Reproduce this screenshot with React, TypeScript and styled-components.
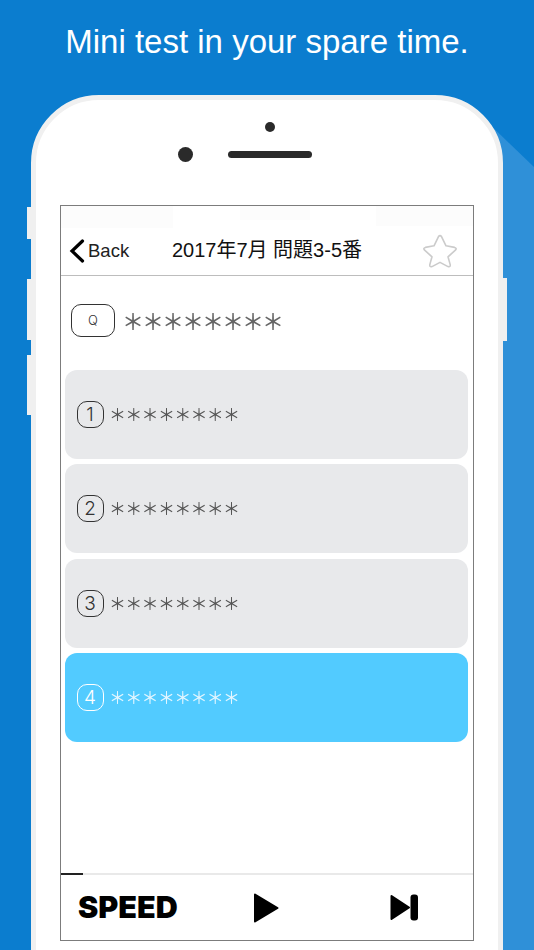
import React from "react";
import styled, { createGlobalStyle } from "styled-components";

const Global = createGlobalStyle`
  html, body { margin: 0; padding: 0; background: #0b7dcf; }
  body { width: 534px; height: 950px; overflow: hidden; font-family: "Liberation Sans", "Noto Sans CJK JP", sans-serif; }
`;

const Page = styled.div`
  position: relative;
  width: 534px;
  height: 950px;
  overflow: hidden;
  background: #0b7dcf;
`;

const Shadow = styled.div`
  position: absolute;
  inset: 0;
  background: #2f90d8;
  clip-path: polygon(480px 115px, 534px 167px, 534px 950px, 480px 950px);
`;

const Headline = styled.h1`
  position: relative;
  margin: 0;
  height: 95px;
  box-sizing: border-box;
  padding-top: 22px;
  text-align: center;
  font-size: 33px;
  line-height: 40px;
  font-weight: 400;
  color: #fff;
`;

const PhoneWrap = styled.div`
  position: relative;
  margin-left: 31px;
  width: 472px;
`;

const SideButton = styled.div<{ $side: "left" | "right"; $top: number; $height: number }>`
  position: absolute;
  ${(p) => p.$side}: -4px;
  top: ${(p) => p.$top}px;
  width: 4px;
  height: ${(p) => p.$height}px;
  background: #f0f0f0;
`;

const Phone = styled.div`
  box-sizing: border-box;
  width: 472px;
  height: 960px;
  background: #fff;
  border: 5px solid #f0f0f0;
  border-radius: 68px 68px 0 0;
  padding: 0 24px;
`;

const SensorArea = styled.div`
  height: 105px;
  box-sizing: border-box;
  padding-top: 22px;
`;

const SensorDot = styled.div`
  width: 10px;
  height: 10px;
  border-radius: 50%;
  background: #2a2a2a;
  margin-left: 205px;
`;

const SensorRow = styled.div`
  display: flex;
  align-items: center;
  gap: 35px;
  margin-top: 15px;
  margin-left: 117.5px;
`;

const Camera = styled.div`
  width: 15px;
  height: 15px;
  border-radius: 50%;
  background: #2a2a2a;
`;

const Speaker = styled.div`
  width: 84px;
  height: 7px;
  border-radius: 4px;
  background: #2a2a2a;
`;

const Screen = styled.div`
  box-sizing: border-box;
  width: 414px;
  height: 736px;
  border: 1.5px solid #7c7c7c;
  background: #fff;
  display: flex;
  flex-direction: column;
`;

const StatusBar = styled.div`
  height: 23px;
  display: flex;
  justify-content: space-between;
  align-items: flex-start;
  flex: none;
`;

const Blur = styled.div<{ $w: number; $h: number }>`
  width: ${(p) => p.$w}px;
  height: ${(p) => p.$h}px;
  background: #fcfcfc;
`;

const NavBar = styled.div`
  position: relative;
  height: 47px;
  flex: none;
  box-sizing: border-box;
  border-bottom: 1.5px solid #bdbdbd;
  display: flex;
  align-items: center;
  justify-content: space-between;
  padding: 0 15.5px 2px 8px;
`;

const BackLink = styled.div`
  display: flex;
  align-items: center;
  gap: 3px;
  font-size: 18.5px;
  color: #222;
`;

const NavTitle = styled.div`
  position: absolute;
  left: 0;
  right: 0;
  top: 9px;
  text-align: center;
  font-size: 20px;
  line-height: 24px;
  color: #111;
`;

const QuestionRow = styled.div`
  height: 94px;
  flex: none;
  box-sizing: border-box;
  padding: 0 0 6px 10px;
  display: flex;
  align-items: center;
  gap: 6.5px;
`;

const QBadge = styled.div`
  box-sizing: border-box;
  width: 44px;
  height: 33px;
  border: 1px solid #333;
  border-radius: 10px;
  display: flex;
  align-items: center;
  justify-content: center;
  font-family: Inter, sans-serif;
  font-weight: 300;
  font-size: 13px;
  color: #333;
`;

const Stars = styled.span<{ $size: number; $step: number; $color: string; $weight: number }>`
  font-family: "Noto Sans CJK JP", sans-serif;
  font-weight: ${(p) => p.$weight};
  font-size: ${(p) => p.$size}px;
  letter-spacing: ${(p) => p.$step}px;
  color: ${(p) => p.$color};
  line-height: 1;
  white-space: nowrap;
  will-change: transform;
  margin-bottom: 2px;
`;

const Answers = styled.div`
  display: flex;
  flex-direction: column;
  gap: 5.3px;
  padding: 0 5px 0 4px;
  flex: 1;
`;

const AnswerCard = styled.div<{ $active?: boolean }>`
  height: 89px;
  flex: none;
  box-sizing: border-box;
  border-radius: 12px;
  background: ${(p) => (p.$active ? "#52cbff" : "#e8e9eb")};
  color: ${(p) => (p.$active ? "#fff" : "#333")};
  display: flex;
  align-items: center;
  gap: 5px;
  padding: 0 0 0 11.5px;
`;

const NumBadge = styled.div<{ $active?: boolean }>`
  box-sizing: border-box;
  width: 27px;
  height: 27px;
  border: 1px solid ${(p) => (p.$active ? "#fff" : "#333")};
  border-radius: 10px;
  display: flex;
  align-items: center;
  justify-content: center;
  font-family: Inter, sans-serif;
  font-size: 19px;
  font-weight: 300;
`;

const Progress = styled.div`
  height: 2.5px;
  flex: none;
  background: #e9e9e9;
`;

const ProgressFill = styled.div`
  height: 100%;
  background: #222;
`;

const Footer = styled.div`
  height: 65px;
  flex: none;
  display: flex;
  align-items: center;
  padding: 0 0 0 17px;
`;

const Speed = styled.div`
  font-family: Inter, "Liberation Sans", sans-serif;
  font-weight: 900;
  font-size: 30.5px;
  line-height: 1;
  color: #000;
  width: 175px;
`;

const IconSlot = styled.div<{ $w: number }>`
  width: ${(p) => p.$w}px;
  display: flex;
  align-items: center;
`;

const answers = [1, 2, 3, 4];
const progress = 22;

export default function App() {
  return (
    <Page>
      <Global />
      <Shadow />
      <Headline>Mini test in your spare time.</Headline>
      <PhoneWrap>
        <SideButton $side="left" $top={112} $height={32} />
        <SideButton $side="left" $top={184} $height={61} />
        <SideButton $side="left" $top={260} $height={60} />
        <SideButton $side="right" $top={183} $height={63} />
        <Phone>
          <SensorArea>
            <SensorDot />
            <SensorRow>
              <Camera />
              <Speaker />
            </SensorRow>
          </SensorArea>
          <Screen>
            <StatusBar>
              <Blur $w={112} $h={22} />
              <Blur $w={70} $h={14} />
              <Blur $w={97} $h={20} />
            </StatusBar>
            <NavBar>
              <BackLink>
                <svg width="16" height="24" viewBox="0 0 16 24">
                  <path d="M13.5 2 L3 12 L13.5 22" fill="none" stroke="#000" strokeWidth="3.2" strokeLinecap="round" strokeLinejoin="miter" />
                </svg>
                Back
              </BackLink>
              <NavTitle>2017年7月 問題3-5番</NavTitle>
              <svg width="36" height="34" viewBox="0 0 36 34">
                <path
                  d="M16.5 2.6 Q18 0.6 19.5 2.6 L24 11.8 L32.6 13.4 Q35.2 14.2 33.4 16.2 L26 22.8 L28.2 30.6 Q28.6 33.4 26 32.6 L18 28.4 L10 32.6 Q7.4 33.4 7.8 30.6 L10 22.8 L2.6 16.2 Q0.8 14.2 3.4 13.4 L12 11.8 Z"
                  fill="none"
                  stroke="#cbcbcb"
                  strokeWidth="1.6"
                  strokeLinejoin="round"
                />
              </svg>
            </NavBar>
            <QuestionRow>
              <QBadge>Q</QBadge>
              <Stars $size={22} $step={-2} $weight={500} $color="#666">＊＊＊＊＊＊＊＊</Stars>
            </QuestionRow>
            <Answers>
              {answers.map((n) => (
                <AnswerCard key={n} $active={n === 4}>
                  <NumBadge $active={n === 4}>{n}</NumBadge>
                  <Stars $size={17} $step={-0.7} $weight={400} $color={n === 4 ? "#e4f6ff" : "#555"}>＊＊＊＊＊＊＊＊</Stars>
                </AnswerCard>
              ))}
            </Answers>
            <Progress>
              <ProgressFill style={{ width: `${progress}px` }} />
            </Progress>
            <Footer>
              <Speed>SPEED</Speed>
              <IconSlot $w={136.5}>
                <svg width="26" height="30" viewBox="0 0 26 30">
                  <path d="M2 1.5 L24.5 15 L2 28.5 Z" fill="#000" stroke="#000" strokeWidth="2" strokeLinejoin="round" />
                </svg>
              </IconSlot>
              <IconSlot $w={30}>
                <svg width="29" height="27" viewBox="0 0 29 27">
                  <path d="M1.5 2 L19 13.5 L1.5 25 Z" fill="#000" stroke="#000" strokeWidth="2" strokeLinejoin="round" />
                  <rect x="20.5" y="0.5" width="7.5" height="26" rx="3" fill="#000" />
                </svg>
              </IconSlot>
            </Footer>
          </Screen>
        </Phone>
      </PhoneWrap>
    </Page>
  );
}
